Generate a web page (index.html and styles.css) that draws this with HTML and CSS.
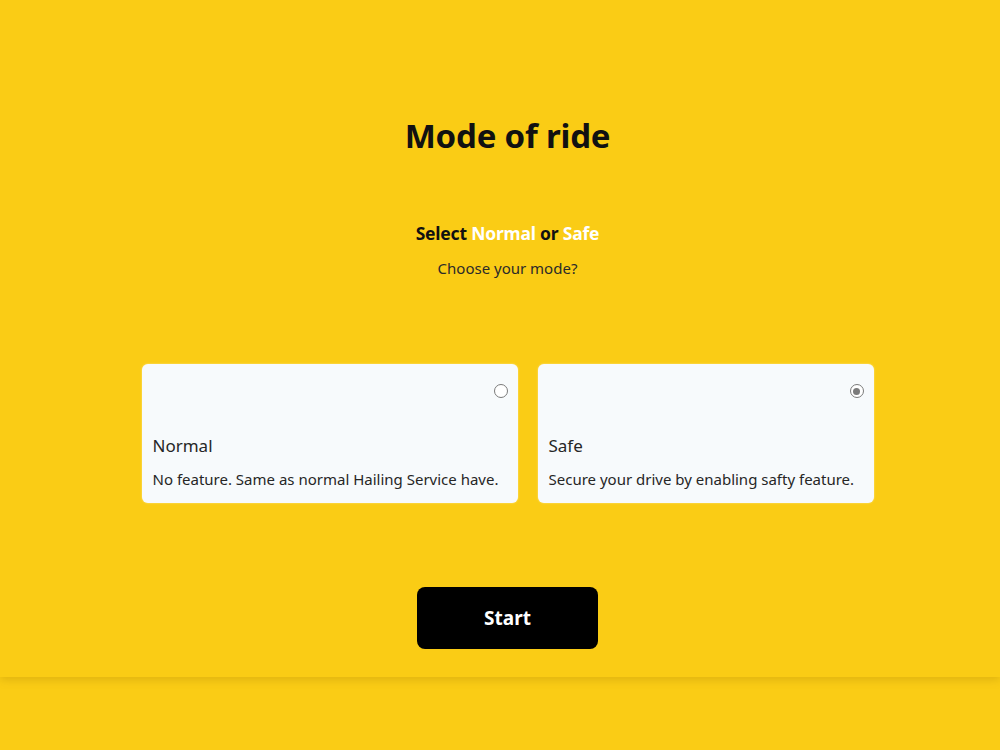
FILE: index.html
```html
<!DOCTYPE html>
<html>
  <head>
    <meta charset="UTF-8" />
    <title>Mode of ride</title>
    <link rel="stylesheet" href="styles.css">
  </head>
  <body>
    <section class="mode">
      <h1 class="mode__title">Mode of ride</h1>

      <div class="mode__intro">
        <p class="mode__select">Select <span class="mode__accent">Normal</span> or <span class="mode__accent">Safe</span></p>
        <small class="mode__hint">Choose your mode?</small>
      </div>

      <div class="mode__options">
        <label class="option option--wide">
          <span class="option__radio"></span>
          <span class="option__name">Normal</span>
          <span class="option__text">No feature. Same as normal Hailing Service have.</span>
        </label>

        <label class="option option--narrow">
          <span class="option__radio option__radio--checked"></span>
          <span class="option__name">Safe</span>
          <span class="option__text">Secure your drive by enabling safty feature.</span>
        </label>
      </div>

      <button class="mode__start">Start</button>
    </section>
  </body>
</html>
```

FILE: styles.css
```css
:root {
  --color-bg: #facc15;
  --color-card: #f7fafc;
  --color-main: #111;
  --color-text: #262626;
  --color-radio: #7a7a7a;
  --color-white: #fff;
}

* {
  box-sizing: border-box;
  margin: 0;
  padding: 0;
}

html,
body {
  height: 100%;
}

body {
  background-color: var(--color-bg);
  font-family: "Noto Sans", "Open Sans", sans-serif;
  color: var(--color-main);
}

.mode {
  display: flex;
  flex-direction: column;
  align-items: center;
  height: 677px;
  padding: 112px 0 0 15px;
  box-shadow: 0 3px 8px rgba(150, 110, 0, 0.25);
}

.mode__title {
  font-size: 33px;
  font-weight: 700;
  line-height: 48px;
  letter-spacing: -0.2px;
}

.mode__intro {
  display: flex;
  flex-direction: column;
  align-items: center;
  gap: 12px;
  margin-top: 61px;
}

.mode__select {
  font-size: 17.5px;
  font-weight: 700;
  line-height: 24px;
  letter-spacing: -0.2px;
}

.mode__accent {
  color: var(--color-white);
}

.mode__hint {
  font-size: 15px;
  line-height: 22px;
  color: #2a2a2a;
}

.mode__options {
  display: flex;
  gap: 20px;
  margin-top: 85px;
}

.option {
  display: flex;
  flex-direction: column;
  height: 139px;
  padding: 20px 10px 13px 11px;
  background-color: var(--color-card);
  border-radius: 6px;
  box-shadow: 0 0 2px rgba(255, 240, 180, 0.8);
  color: var(--color-text);
}

.option--wide {
  width: 376px;
}

.option--narrow {
  width: 336px;
}

.option__radio {
  align-self: flex-end;
  width: 14px;
  height: 14px;
  border: 1px solid var(--color-radio);
  border-radius: 50%;
  background-color: var(--color-white);
  position: relative;
}

.option__radio--checked::after {
  content: "";
  position: absolute;
  top: 2.5px;
  left: 2.5px;
  width: 7px;
  height: 7px;
  border-radius: 50%;
  background-color: var(--color-radio);
}

.option__name {
  margin-top: auto;
  font-size: 17px;
  line-height: 24px;
}

.option__text {
  margin-top: 10px;
  font-size: 15px;
  line-height: 22px;
  white-space: nowrap;
}

.mode__start {
  margin-top: 84px;
  width: 181px;
  height: 62px;
  border: none;
  border-radius: 8px;
  background-color: #000;
  color: var(--color-white);
  font-family: inherit;
  font-size: 19px;
  font-weight: 700;
}
```
